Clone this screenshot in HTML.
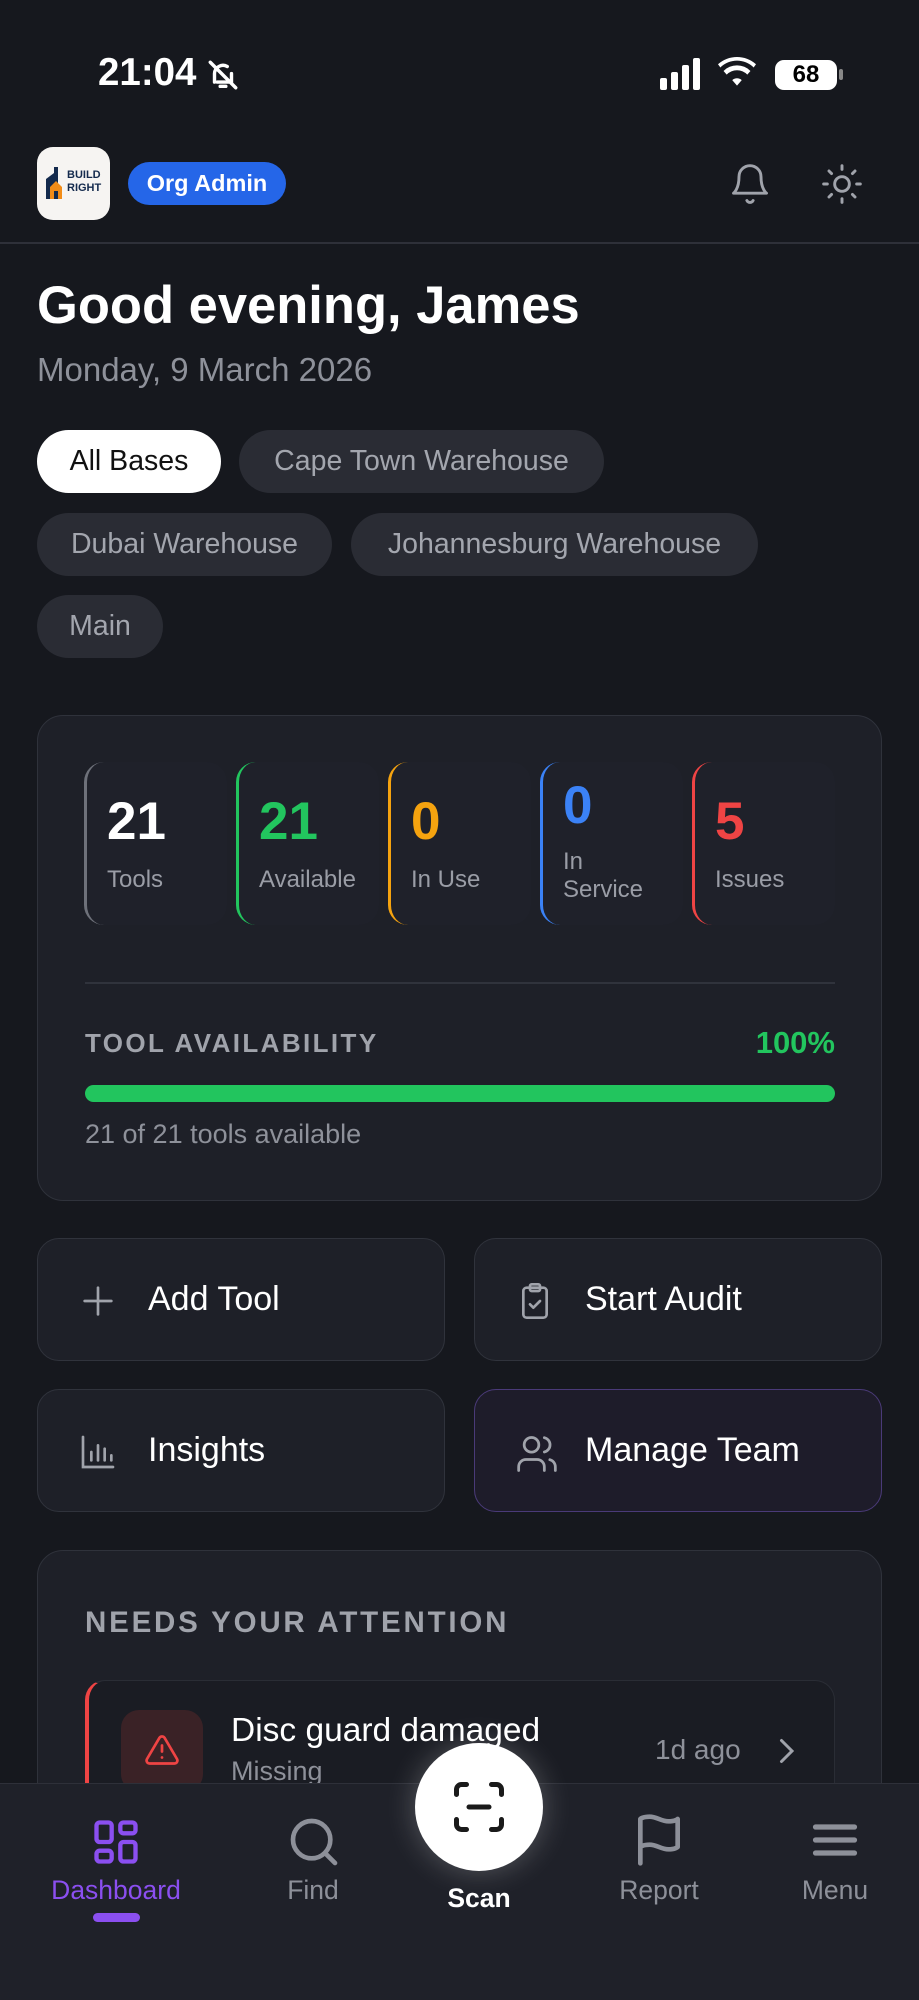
<!DOCTYPE html>
<html><head><meta charset="utf-8"><style>
*{box-sizing:border-box;margin:0;padding:0}
body{width:919px;height:2000px;background:#16181e;font-family:"Liberation Sans",sans-serif;color:#fff;position:relative;overflow:hidden}
.a{position:absolute}
.chip{position:absolute;height:63px;border-radius:32px;background:#2a2c34;color:#a3a6ae;font-size:28.5px;line-height:63px;text-align:center}
.card{position:absolute;left:37px;width:845px;background:#1e2028;border:1.5px solid #2f323b;border-radius:26px}
.stat{position:absolute;top:762px;width:143px;height:163px;border-left:3px solid;border-radius:20px;background:#1f212a}
.stat .n{position:absolute;left:20px;top:30px;font-size:53px;font-weight:bold;line-height:60px}
.stat .l{position:absolute;left:20px;top:104px;font-size:24px;color:#9a9da6;line-height:28px}
.btn{position:absolute;width:408px;height:123px;background:#1e2028;border:1.5px solid #30333c;border-radius:22px;font-size:34px;line-height:120px}
.btn span{position:absolute;left:110px}
.btn svg{position:absolute;left:40px;top:42px}
.nl{position:absolute;top:1875px;font-size:26.5px;color:#8d9099;transform:translateX(-50%)}
</style></head><body>
<div class="a" style="left:98px;top:51px;font-size:38.5px;font-weight:bold">21:04</div>
<svg class="a" style="left:206px;top:58px" width="34" height="34" viewBox="0 0 24 24" fill="none" stroke="#fff" stroke-width="2.4" stroke-linecap="round"><path d="M6 17V11a6 6 0 0 1 9-5M18 11v6H8M10 20h4M3 3l18 18"/></svg>
<div class="a" style="left:660px;top:78px;width:7px;height:12px;background:#fff;border-radius:2px"></div>
<div class="a" style="left:671px;top:72px;width:7px;height:18px;background:#fff;border-radius:2px"></div>
<div class="a" style="left:682px;top:65px;width:7px;height:25px;background:#fff;border-radius:2px"></div>
<div class="a" style="left:693px;top:58px;width:7px;height:32px;background:#fff;border-radius:2px"></div>
<svg class="a" style="left:718px;top:56px" width="38" height="34" viewBox="0 0 24 20"><path d="M12 18l3-3.5a4.5 4.5 0 0 0-6 0z M5.5 11a9 9 0 0 1 13 0l2-2.3a12 12 0 0 0-17 0z M1.5 6.5a15 15 0 0 1 21 0L24 4.5a18 18 0 0 0-24 0z" fill="#fff"/></svg>
<div class="a" style="left:775px;top:60px;width:62px;height:30px;background:#fff;border-radius:9px;color:#000;font-weight:bold;font-size:24px;line-height:30px;text-align:center">68</div>
<div class="a" style="left:839px;top:69px;width:4px;height:11px;background:#888;border-radius:2px"></div>

<div class="a" style="left:37px;top:147px;width:73px;height:73px;background:#f6f4f2;border-radius:16px"></div>
<svg class="a" style="left:44px;top:165px" width="22" height="34" viewBox="0 0 22 34"><path d="M2 34V14l8-6V2h4v32z" fill="#142a4d"/><path d="M6 34V22l6-6 6 6v12h-4v-8h-4v8z" fill="#f28c18"/></svg>
<div class="a" style="left:67px;top:169px;font-size:11px;font-weight:bold;color:#142a4d;line-height:13px">BUILD<br>RIGHT</div>
<div class="a" style="left:128px;top:162px;width:158px;height:43px;background:#2566e8;border-radius:22px;font-size:23.5px;font-weight:bold;line-height:43px;text-align:center">Org Admin</div>
<svg class="a" style="left:728px;top:162px" width="44" height="44" viewBox="0 0 24 24" fill="none" stroke="#a0a3ab" stroke-width="1.6" stroke-linecap="round" stroke-linejoin="round"><path d="M6 8a6 6 0 0 1 12 0c0 7 3 9 3 9H3s3-2 3-9M10.3 21a1.9 1.9 0 0 0 3.4 0"/></svg>
<svg class="a" style="left:820px;top:162px" width="44" height="44" viewBox="0 0 24 24" fill="none" stroke="#a0a3ab" stroke-width="1.6" stroke-linecap="round"><circle cx="12" cy="12" r="4"/><path d="M12 2v2M12 20v2M4.9 4.9l1.4 1.4M17.7 17.7l1.4 1.4M2 12h2M20 12h2M4.9 19.1l1.4-1.4M17.7 6.3l1.4-1.4"/></svg>
<div class="a" style="left:0;top:242px;width:919px;height:2px;background:#2e3039"></div>

<div class="a" style="left:37px;top:276px;font-size:52.5px;font-weight:bold;line-height:60px">Good evening, James</div>
<div class="a" style="left:37px;top:351px;font-size:33px;color:#8e919a">Monday, 9 March 2026</div>

<div class="chip" style="left:37px;top:430px;width:184px;background:#fff;color:#111">All Bases</div>
<div class="chip" style="left:239px;top:430px;width:365px">Cape Town Warehouse</div>
<div class="chip" style="left:37px;top:513px;width:295px">Dubai Warehouse</div>
<div class="chip" style="left:351px;top:513px;width:407px">Johannesburg Warehouse</div>
<div class="chip" style="left:37px;top:595px;width:126px">Main</div>

<div class="card" style="top:715px;height:486px"></div>
<div class="stat" style="left:84px;border-color:#6e717a"><div class="n">21</div><div class="l">Tools</div></div>
<div class="stat" style="left:236px;border-color:#22c55e"><div class="n" style="color:#22c55e">21</div><div class="l">Available</div></div>
<div class="stat" style="left:388px;border-color:#f5a30f"><div class="n" style="color:#f5a30f">0</div><div class="l">In Use</div></div>
<div class="stat" style="left:540px;border-color:#3b82f6"><div class="n" style="color:#3b82f6;top:14px">0</div><div class="l" style="top:86px">In<br>Service</div></div>
<div class="stat" style="left:692px;border-color:#ef4444"><div class="n" style="color:#ef4444">5</div><div class="l">Issues</div></div>
<div class="a" style="left:85px;top:982px;width:750px;height:1.5px;background:#30333c"></div>
<div class="a" style="left:85px;top:1028px;font-size:26px;font-weight:bold;letter-spacing:2.4px;color:#a0a3ab">TOOL AVAILABILITY</div>
<div class="a" style="left:650px;top:1025px;width:185px;text-align:right;font-size:31px;font-weight:bold;color:#22c55e">100%</div>
<div class="a" style="left:85px;top:1085px;width:750px;height:17px;background:#22c55e;border-radius:9px"></div>
<div class="a" style="left:85px;top:1119px;font-size:27px;color:#8e919a">21 of 21 tools available</div>

<div class="btn" style="left:37px;top:1238px"><svg width="40" height="40" viewBox="0 0 24 24" fill="none" stroke="#a0a3ab" stroke-width="1.6" stroke-linecap="round"><path d="M12 4v16M4 12h16"/></svg><span>Add Tool</span></div>
<div class="btn" style="left:474px;top:1238px"><svg width="40" height="40" viewBox="0 0 24 24" fill="none" stroke="#a0a3ab" stroke-width="1.6" stroke-linecap="round" stroke-linejoin="round"><rect x="5" y="4" width="14" height="18" rx="2"/><rect x="9" y="2" width="6" height="4" rx="1"/><path d="M9 14l2 2 4-4"/></svg><span>Start Audit</span></div>
<div class="btn" style="left:37px;top:1389px"><svg width="40" height="40" viewBox="0 0 24 24" fill="none" stroke="#a0a3ab" stroke-width="1.6" stroke-linecap="round"><path d="M3 3v18h18M8 17v-5M12 17V8M16 17v-7M20 17v-3"/></svg><span>Insights</span></div>
<div class="btn" style="left:474px;top:1389px;background:#1e1c2a;border-color:#4a3a78"><svg width="44" height="44" viewBox="0 0 24 24" fill="none" stroke="#a0a3ab" stroke-width="1.5" stroke-linecap="round"><circle cx="9" cy="7" r="4"/><path d="M2 21v-2a4 4 0 0 1 4-4h6a4 4 0 0 1 4 4v2M16 3.1a4 4 0 0 1 0 7.8M22 21v-2a4 4 0 0 0-3-3.9"/></svg><span>Manage Team</span></div>

<div class="card" style="top:1550px;height:400px"></div>
<div class="a" style="left:85px;top:1606px;font-size:29.5px;font-weight:bold;letter-spacing:2.8px;color:#a0a3ab">NEEDS YOUR ATTENTION</div>
<div class="a" style="left:85px;top:1680px;width:750px;height:200px;background:#1a1c23;border:1.5px solid #2a2d35;border-left:4px solid #ef4444;border-radius:20px"></div>
<div class="a" style="left:121px;top:1710px;width:82px;height:82px;background:#3a2226;border-radius:18px"></div>
<svg class="a" style="left:144px;top:1732px" width="36" height="36" viewBox="0 0 24 24" fill="none" stroke="#ef4444" stroke-width="1.8" stroke-linecap="round" stroke-linejoin="round"><path d="M10.3 3.9L2 18a2 2 0 0 0 1.7 3h16.6a2 2 0 0 0 1.7-3L13.7 3.9a2 2 0 0 0-3.4 0zM12 9v4M12 17h.01"/></svg>
<div class="a" style="left:231px;top:1712px;font-size:33.5px">Disc guard damaged</div>
<div class="a" style="left:231px;top:1756px;font-size:27px;color:#8e919a">Missing</div>
<div class="a" style="left:655px;top:1734px;font-size:28px;color:#8e919a">1d ago</div>
<svg class="a" style="left:774px;top:1736px" width="24" height="30" viewBox="0 0 12 20" fill="none" stroke="#a0a3ab" stroke-width="2" stroke-linecap="round"><path d="M3 3l7 7-7 7"/></svg>

<div class="a" style="left:0;top:1783px;width:919px;height:217px;background:#1f2129;border-top:1.5px solid #2e3039"></div>
<div class="a" style="left:415px;top:1743px;width:128px;height:128px;border-radius:50%;background:#fff;box-shadow:0 0 30px rgba(255,255,255,0.25)"></div>
<svg class="a" style="left:449px;top:1777px" width="60" height="60" viewBox="0 0 24 24" fill="none" stroke="#1a1a1a" stroke-width="2" stroke-linecap="round"><path d="M3 7V5a2 2 0 0 1 2-2h2M17 3h2a2 2 0 0 1 2 2v2M21 17v2a2 2 0 0 1-2 2h-2M7 21H5a2 2 0 0 1-2-2v-2M8 12h8"/></svg>
<svg class="a" style="left:90px;top:1816px" width="52" height="52" viewBox="0 0 24 24" fill="none" stroke="#8b4ff0" stroke-width="2" stroke-linejoin="round"><rect x="3" y="3" width="7" height="9" rx="1.5"/><rect x="14" y="3" width="7" height="5" rx="1.5"/><rect x="14" y="12" width="7" height="9" rx="1.5"/><rect x="3" y="16" width="7" height="5" rx="1.5"/></svg>
<div class="nl" style="left:116px;color:#8b4ff0">Dashboard</div>
<div class="a" style="left:93px;top:1913px;width:47px;height:9px;border-radius:5px;background:#8b4ff0"></div>
<svg class="a" style="left:286px;top:1814px" width="56" height="56" viewBox="0 0 24 24" fill="none" stroke="#8d9099" stroke-width="2" stroke-linecap="round"><circle cx="11" cy="11" r="8"/><path d="M21 21l-4.3-4.3"/></svg>
<div class="nl" style="left:313px">Find</div>
<div class="nl" style="left:479px;top:1883px;color:#fff;font-weight:bold">Scan</div>
<svg class="a" style="left:631px;top:1812px" width="56" height="56" viewBox="0 0 24 24" fill="none" stroke="#8d9099" stroke-width="2" stroke-linecap="round" stroke-linejoin="round"><path d="M4 15s1-1 4-1 5 2 8 2 4-1 4-1V3s-1 1-4 1-5-2-8-2-4 1-4 1zM4 22v-7"/></svg>
<div class="nl" style="left:659px">Report</div>
<svg class="a" style="left:809px;top:1814px" width="52" height="52" viewBox="0 0 24 24" fill="none" stroke="#8d9099" stroke-width="2.4" stroke-linecap="round"><path d="M3 6h18M3 12h18M3 18h18"/></svg>
<div class="nl" style="left:835px">Menu</div>
</body></html>
